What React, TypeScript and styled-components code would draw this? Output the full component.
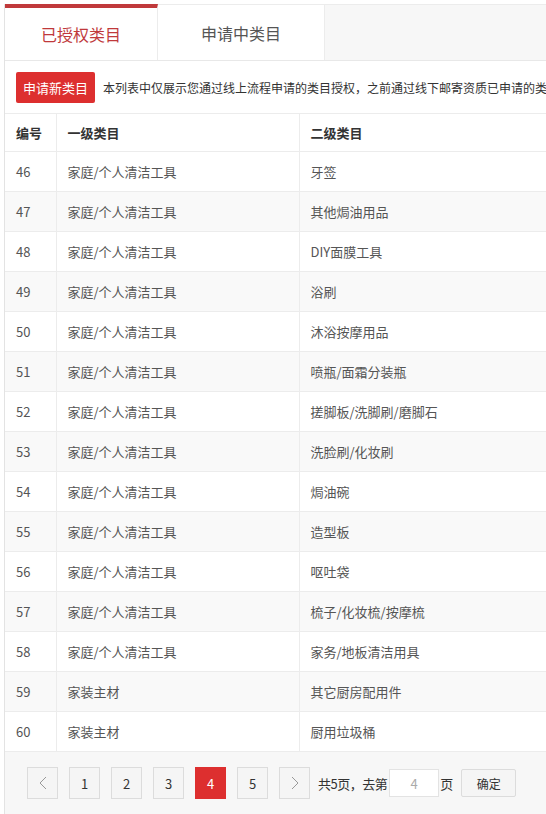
import React from 'react';
import styled, { createGlobalStyle } from 'styled-components';

const GlobalStyle = createGlobalStyle`
  html, body {
    margin: 0;
    padding: 0;
    background: #fff;
    overflow: hidden;
  }
  body {
    font-family: 'Noto Sans CJK SC', 'Noto Sans', 'Liberation Sans', sans-serif;
    color: #333;
  }
`;

const Page = styled.div`
  padding: 4px 0 0 4px;
  width: 580px;
`;

const Panel = styled.div`
  border-left: 1px solid #e3e3e3;
  border-top: 1px solid #ececec;
`;

const TabBar = styled.div`
  display: flex;
  height: 55px;
  background: #f7f7f7;
  border-bottom: 1px solid #e8e8e8;
`;

const Tab = styled.div<{ $active?: boolean; $width: number }>`
  width: ${p => p.$width}px;
  box-sizing: border-box;
  display: flex;
  align-items: center;
  justify-content: center;
  background: #fff;
  font-size: 16px;
  color: ${p => (p.$active ? '#c0393b' : '#555')};
  border-top: ${p => (p.$active ? '4px solid #c0393b' : 'none')};
  border-right: 1px solid #ececec;
  margin-top: ${p => (p.$active ? '-1px' : '0')};
`;

const Toolbar = styled.div`
  display: flex;
  align-items: center;
  height: 52px;
  padding-left: 11px;
  gap: 8px;
  border-bottom: 1px solid #ececec;
  overflow: hidden;
`;

const RedButton = styled.button`
  flex-shrink: 0;
  height: 31px;
  padding: 0 7px;
  border: none;
  border-radius: 2px;
  background: #dd2f2f;
  color: #fff;
  font-family: inherit;
  font-size: 13px;
  white-space: nowrap;
`;

const Notice = styled.span`
  font-size: 12px;
  color: #333;
  white-space: nowrap;
`;

const Table = styled.table`
  border-collapse: collapse;
  width: 100%;
  font-size: 13px;
  color: #555;
`;

const HeadCell = styled.th<{ $width?: number }>`
  height: 37px;
  text-align: left;
  font-weight: bold;
  color: #333;
  padding: 0 0 0 11px;
  border-right: 1px solid #ececec;
  border-bottom: 1px solid #ececec;
  width: ${p => (p.$width ? `${p.$width}px` : 'auto')};
  box-sizing: border-box;
`;

const Row = styled.tr`
  &:nth-child(even) {
    background: #f9f9f9;
  }
`;

const Cell = styled.td`
  height: 39px;
  padding: 0 0 0 11px;
  border-right: 1px solid #ececec;
  border-bottom: 1px solid #ececec;
`;

const Pager = styled.div`
  display: flex;
  align-items: center;
  height: 63px;
  padding-left: 22px;
  background: #f7f7f7;
  font-size: 12px;
  color: #333;
`;

const PageButton = styled.div<{ $active?: boolean }>`
  width: 31px;
  height: 32px;
  box-sizing: border-box;
  display: flex;
  align-items: center;
  justify-content: center;
  margin-right: 11px;
  border: 1px solid ${p => (p.$active ? '#dd2f2f' : '#dcdcdc')};
  background: ${p => (p.$active ? '#dd2f2f' : '#f5f5f5')};
  color: ${p => (p.$active ? '#fff' : '#333')};
  font-size: 13px;
`;

const PagerText = styled.span`
  margin-left: -3px;
  font-size: 13px;
  letter-spacing: -0.5px;
`;

const PageInput = styled.div`
  width: 50px;
  height: 28px;
  box-sizing: border-box;
  margin: 0 1px 0 2px;
  display: flex;
  align-items: center;
  justify-content: center;
  background: #fff;
  border: 1px solid #e3e3e3;
  color: #aaa;
  font-size: 13px;
`;

const PageUnit = styled.span`
  font-size: 13px;
`;

const ConfirmButton = styled.div`
  width: 55px;
  height: 28px;
  box-sizing: border-box;
  margin-left: 8px;
  display: flex;
  align-items: center;
  justify-content: center;
  border: 1px solid #dcdcdc;
  border-radius: 2px;
  background: #f5f5f5;
  font-size: 12px;
  color: #333;
`;

const Chevron = ({ dir }: { dir: 'left' | 'right' }) => (
  <svg width="8" height="14" viewBox="0 0 8 14" fill="none">
    <path
      d={dir === 'left' ? 'M7 1L1 7l6 6' : 'M1 1l6 6-6 6'}
      stroke="#999"
      strokeWidth="1"
    />
  </svg>
);

const rows: [number, string, string][] = [
  [46, '家庭/个人清洁工具', '牙签'],
  [47, '家庭/个人清洁工具', '其他焗油用品'],
  [48, '家庭/个人清洁工具', 'DIY面膜工具'],
  [49, '家庭/个人清洁工具', '浴刷'],
  [50, '家庭/个人清洁工具', '沐浴按摩用品'],
  [51, '家庭/个人清洁工具', '喷瓶/面霜分装瓶'],
  [52, '家庭/个人清洁工具', '搓脚板/洗脚刷/磨脚石'],
  [53, '家庭/个人清洁工具', '洗脸刷/化妆刷'],
  [54, '家庭/个人清洁工具', '焗油碗'],
  [55, '家庭/个人清洁工具', '造型板'],
  [56, '家庭/个人清洁工具', '呕吐袋'],
  [57, '家庭/个人清洁工具', '梳子/化妆梳/按摩梳'],
  [58, '家庭/个人清洁工具', '家务/地板清洁用具'],
  [59, '家装主材', '其它厨房配用件'],
  [60, '家装主材', '厨用垃圾桶'],
];

const App = () => {
  return (
    <Page>
      <GlobalStyle />
      <Panel>
        <TabBar>
          <Tab $active $width={153}>已授权类目</Tab>
          <Tab $width={167}>申请中类目</Tab>
        </TabBar>

        <Toolbar>
          <RedButton>申请新类目</RedButton>
          <Notice>本列表中仅展示您通过线上流程申请的类目授权，之前通过线下邮寄资质已申请的类</Notice>
        </Toolbar>

        <Table>
          <thead>
            <tr>
              <HeadCell $width={51}>编号</HeadCell>
              <HeadCell $width={243}>一级类目</HeadCell>
              <HeadCell>二级类目</HeadCell>
            </tr>
          </thead>
          <tbody>
            {rows.map(([id, first, second]) => (
              <Row key={id}>
                <Cell>{id}</Cell>
                <Cell>{first}</Cell>
                <Cell>{second}</Cell>
              </Row>
            ))}
          </tbody>
        </Table>

        <Pager>
          <PageButton>
            <Chevron dir="left" />
          </PageButton>
          {[1, 2, 3, 4, 5].map(n => (
            <PageButton key={n} $active={n === 4}>
              {n}
            </PageButton>
          ))}
          <PageButton>
            <Chevron dir="right" />
          </PageButton>
          <PagerText>共5页，去第</PagerText>
          <PageInput>4</PageInput>
          <PageUnit>页</PageUnit>
          <ConfirmButton>确定</ConfirmButton>
        </Pager>
      </Panel>
    </Page>
  );
};

export default App;
